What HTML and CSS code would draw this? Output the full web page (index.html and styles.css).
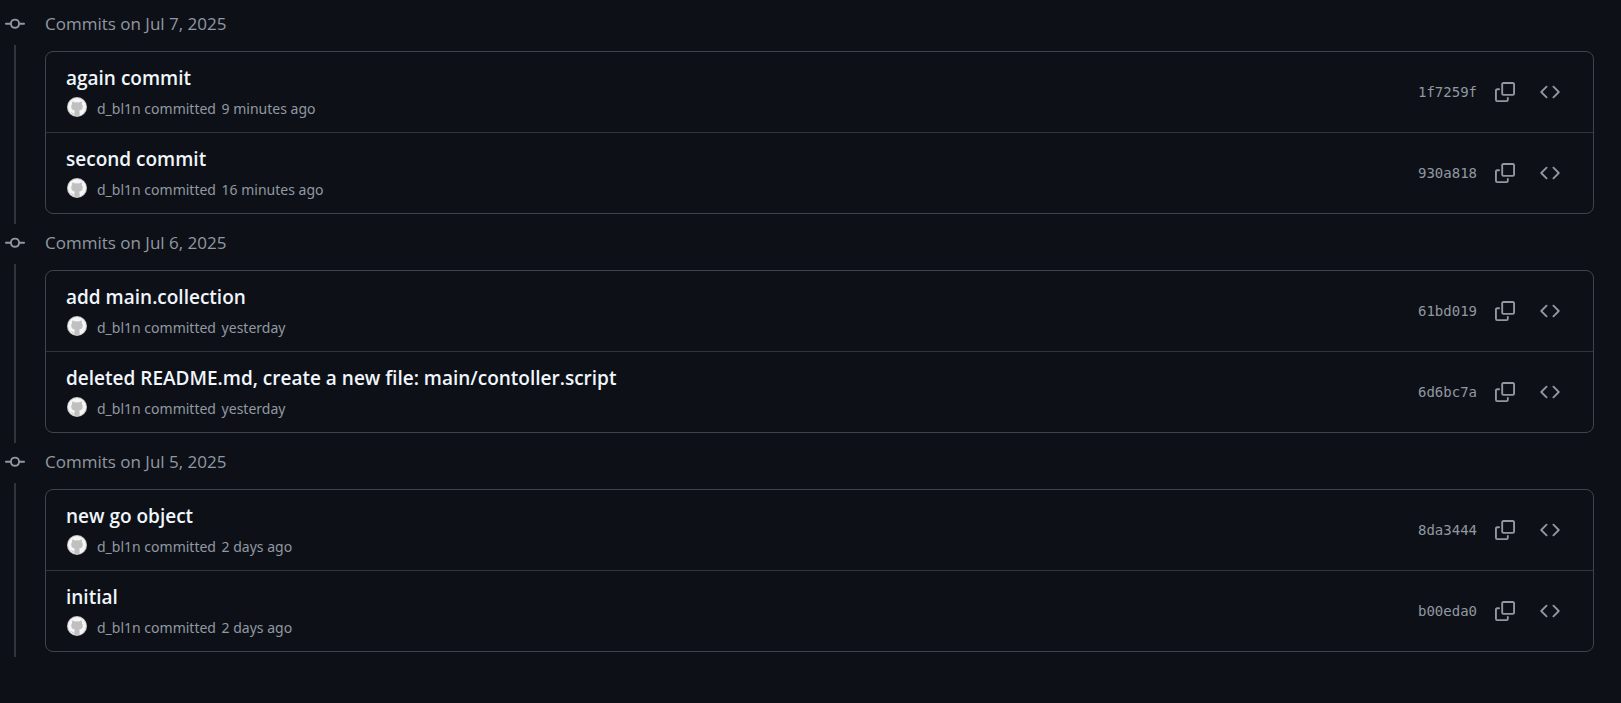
FILE: index.html
```html
<!DOCTYPE html>
<html lang="en">
<head>
<meta charset="utf-8">
<title>Commits</title>
<link rel="stylesheet" href="styles.css">
</head>
<body>
<svg class="sprite" aria-hidden="true">
  <symbol id="i-commit" viewBox="0 0 16 16"><path d="M11.93 8.5a4.002 4.002 0 0 1-7.86 0H.75a.75.75 0 0 1 0-1.5h3.32a4.002 4.002 0 0 1 7.86 0h3.32a.75.75 0 0 1 0 1.5Zm-1.43-.75a2.5 2.5 0 1 0-5 0 2.5 2.5 0 0 0 5 0Z"/></symbol>
  <symbol id="i-copy" viewBox="0 0 16 16"><path d="M0 6.75C0 5.784.784 5 1.75 5h1.5a.75.75 0 0 1 0 1.5h-1.5a.25.25 0 0 0-.25.25v7.5c0 .138.112.25.25.25h7.5a.25.25 0 0 0 .25-.25v-1.5a.75.75 0 0 1 1.5 0v1.5A1.75 1.75 0 0 1 9.25 16h-7.5A1.75 1.75 0 0 1 0 14.25Z"/><path d="M5 1.75C5 .784 5.784 0 6.75 0h7.5C15.216 0 16 .784 16 1.75v7.5A1.75 1.75 0 0 1 14.25 11h-7.5A1.75 1.75 0 0 1 5 9.25Zm1.75-.25a.25.25 0 0 0-.25.25v7.5c0 .138.112.25.25.25h7.5a.25.25 0 0 0 .25-.25v-7.5a.25.25 0 0 0-.25-.25Z"/></symbol>
  <symbol id="i-code" viewBox="0 0 16 16"><path d="m11.28 3.22 4.25 4.25a.75.75 0 0 1 0 1.06l-4.25 4.25a.749.749 0 0 1-1.275-.326.749.749 0 0 1 .215-.734L13.94 8l-3.72-3.72a.749.749 0 0 1 .326-1.275.749.749 0 0 1 .734.215Zm-6.56 0a.751.751 0 0 1 1.042.018.751.751 0 0 1 .018 1.042L2.06 8l3.72 3.72a.749.749 0 0 1-.326 1.275.749.749 0 0 1-.734-.215L.47 8.53a.75.75 0 0 1 0-1.06Z"/></symbol>
  <symbol id="i-avatar" viewBox="0 0 20 20"><circle cx="10" cy="10" r="10" fill="#c9c9c9"/><circle cx="10" cy="10" r="9" fill="#f6f6f6"/><path fill="#c0c0c0" d="M5.300 4.500C6.300 4.400 7.200 5 7.900 5.500Q10 5 12.100 5.500C12.800 5 13.700 4.400 14.700 4.500C15.100 5.500 15 6.400 14.800 7C15.500 7.800 15.800 8.600 15.800 9.600C15.800 12.600 14 13.500 12 13.800C12.400 14.300 12.600 14.800 12.600 15.500V18.600Q10 19.300 7.400 18.600V17.300C5.600 17.600 5 16.600 4.500 15.800C4.300 15.400 4 15.200 3.700 15C4.600 14.700 5.200 15.200 5.600 15.900C6 16.500 6.500 16.800 7.400 16.600V15.500C7.400 14.800 7.600 14.300 8 13.800C6 13.500 4.200 12.600 4.200 9.600C4.200 8.600 4.500 7.800 5.200 7C5 6.400 4.900 5.500 5.300 4.500Z"/></symbol>
</svg>
<main class="timeline">
  <section class="day">
    <svg class="icon day-icon" aria-hidden="true"><use href="#i-commit"/></svg>
    <h3 class="day-title">Commits on Jul 7, 2025</h3>
    <div class="rail"></div>
    <ul class="commits">
      <li class="commit">
        <div class="info">
          <h4 class="title"><a href="#1f7259f">again commit</a></h4>
          <div class="meta"><svg class="avatar" aria-hidden="true"><use href="#i-avatar"/></svg><span><a href="#d_bl1n">d_bl1n</a> committed <time>9 minutes ago</time></span></div>
        </div>
        <a class="sha" href="#1f7259f">1f7259f</a>
        <div class="actions"><button type="button" aria-label="Copy full SHA for 1f7259f"><svg class="icon"><use href="#i-copy"/></svg></button><button type="button" aria-label="View code at 1f7259f"><svg class="icon"><use href="#i-code"/></svg></button></div>
      </li>
      <li class="commit">
        <div class="info">
          <h4 class="title"><a href="#930a818">second commit</a></h4>
          <div class="meta"><svg class="avatar" aria-hidden="true"><use href="#i-avatar"/></svg><span><a href="#d_bl1n">d_bl1n</a> committed <time>16 minutes ago</time></span></div>
        </div>
        <a class="sha" href="#930a818">930a818</a>
        <div class="actions"><button type="button" aria-label="Copy full SHA for 930a818"><svg class="icon"><use href="#i-copy"/></svg></button><button type="button" aria-label="View code at 930a818"><svg class="icon"><use href="#i-code"/></svg></button></div>
      </li>
    </ul>
  </section>
  <section class="day">
    <svg class="icon day-icon" aria-hidden="true"><use href="#i-commit"/></svg>
    <h3 class="day-title">Commits on Jul 6, 2025</h3>
    <div class="rail"></div>
    <ul class="commits">
      <li class="commit">
        <div class="info">
          <h4 class="title"><a href="#61bd019">add main.collection</a></h4>
          <div class="meta"><svg class="avatar" aria-hidden="true"><use href="#i-avatar"/></svg><span><a href="#d_bl1n">d_bl1n</a> committed <time>yesterday</time></span></div>
        </div>
        <a class="sha" href="#61bd019">61bd019</a>
        <div class="actions"><button type="button" aria-label="Copy full SHA for 61bd019"><svg class="icon"><use href="#i-copy"/></svg></button><button type="button" aria-label="View code at 61bd019"><svg class="icon"><use href="#i-code"/></svg></button></div>
      </li>
      <li class="commit">
        <div class="info">
          <h4 class="title"><a href="#6d6bc7a">deleted README.md, create a new file: main/contoller.script</a></h4>
          <div class="meta"><svg class="avatar" aria-hidden="true"><use href="#i-avatar"/></svg><span><a href="#d_bl1n">d_bl1n</a> committed <time>yesterday</time></span></div>
        </div>
        <a class="sha" href="#6d6bc7a">6d6bc7a</a>
        <div class="actions"><button type="button" aria-label="Copy full SHA for 6d6bc7a"><svg class="icon"><use href="#i-copy"/></svg></button><button type="button" aria-label="View code at 6d6bc7a"><svg class="icon"><use href="#i-code"/></svg></button></div>
      </li>
    </ul>
  </section>
  <section class="day">
    <svg class="icon day-icon" aria-hidden="true"><use href="#i-commit"/></svg>
    <h3 class="day-title">Commits on Jul 5, 2025</h3>
    <div class="rail"></div>
    <ul class="commits">
      <li class="commit">
        <div class="info">
          <h4 class="title"><a href="#8da3444">new go object</a></h4>
          <div class="meta"><svg class="avatar" aria-hidden="true"><use href="#i-avatar"/></svg><span><a href="#d_bl1n">d_bl1n</a> committed <time>2 days ago</time></span></div>
        </div>
        <a class="sha" href="#8da3444">8da3444</a>
        <div class="actions"><button type="button" aria-label="Copy full SHA for 8da3444"><svg class="icon"><use href="#i-copy"/></svg></button><button type="button" aria-label="View code at 8da3444"><svg class="icon"><use href="#i-code"/></svg></button></div>
      </li>
      <li class="commit">
        <div class="info">
          <h4 class="title"><a href="#b00eda0">initial</a></h4>
          <div class="meta"><svg class="avatar" aria-hidden="true"><use href="#i-avatar"/></svg><span><a href="#d_bl1n">d_bl1n</a> committed <time>2 days ago</time></span></div>
        </div>
        <a class="sha" href="#b00eda0">b00eda0</a>
        <div class="actions"><button type="button" aria-label="Copy full SHA for b00eda0"><svg class="icon"><use href="#i-copy"/></svg></button><button type="button" aria-label="View code at b00eda0"><svg class="icon"><use href="#i-code"/></svg></button></div>
      </li>
    </ul>
  </section>
</main>
</body>
</html>
```
FILE: styles.css
```css
* {
  box-sizing: border-box;
}

body {
  margin: 0;
  background: #0d1117;
  color: #9198a1;
  font-family: "Segoe UI", "Open Sans", "Noto Sans", sans-serif;
}

a {
  color: inherit;
  text-decoration: none;
}

.sprite {
  display: none;
}

.icon {
  display: block;
  width: 20px;
  height: 20px;
  fill: currentColor;
}

.timeline {
  padding: 5px 27px 0 0;
}

.day {
  display: grid;
  grid-template-columns: 30px 1fr;
  grid-template-rows: 38px auto;
  column-gap: 15px;
  row-gap: 2px;
  align-items: center;
}

.day-icon {
  justify-self: center;
}

.day-title {
  margin: 0;
  font-size: 17px;
  font-weight: 400;
  line-height: 24px;
}

.rail {
  align-self: stretch;
  justify-self: center;
  width: 2px;
  background: #2f353d;
}

.commits {
  margin: 6px 0 10px;
  padding: 0;
  list-style: none;
  border: 1px solid #3d444d;
  border-radius: 8px;
}

.day:last-child .commits {
  margin-bottom: 5px;
}

.commit {
  display: flex;
  align-items: center;
  padding: 0 25px 0 20px;
}

.commit + .commit {
  border-top: 1px solid #2f353d;
}

.info {
  flex: 1;
  min-width: 0;
  padding: 11px 0;
}

.title {
  margin: 0 0 4px;
  color: #f0f6fc;
  font-size: 19px;
  font-weight: 600;
  line-height: 30px;
}

.meta {
  display: flex;
  align-items: flex-start;
  gap: 10px;
  padding-left: 1px;
  font-family: "Segoe UI", "Noto Sans", sans-serif;
  font-size: 14px;
  line-height: 24px;
}

.meta time {
  margin-left: 2px;
}

.avatar {
  width: 20px;
  height: 20px;
}

.sha {
  margin-right: 10px;
  font-family: Consolas, "DejaVu Sans Mono", monospace;
  font-size: 14px;
}

.actions {
  display: flex;
  gap: 9px;
}

button {
  display: grid;
  place-items: center;
  width: 36px;
  height: 36px;
  padding: 0;
  border: 0;
  border-radius: 6px;
  background: none;
  color: inherit;
}
```
